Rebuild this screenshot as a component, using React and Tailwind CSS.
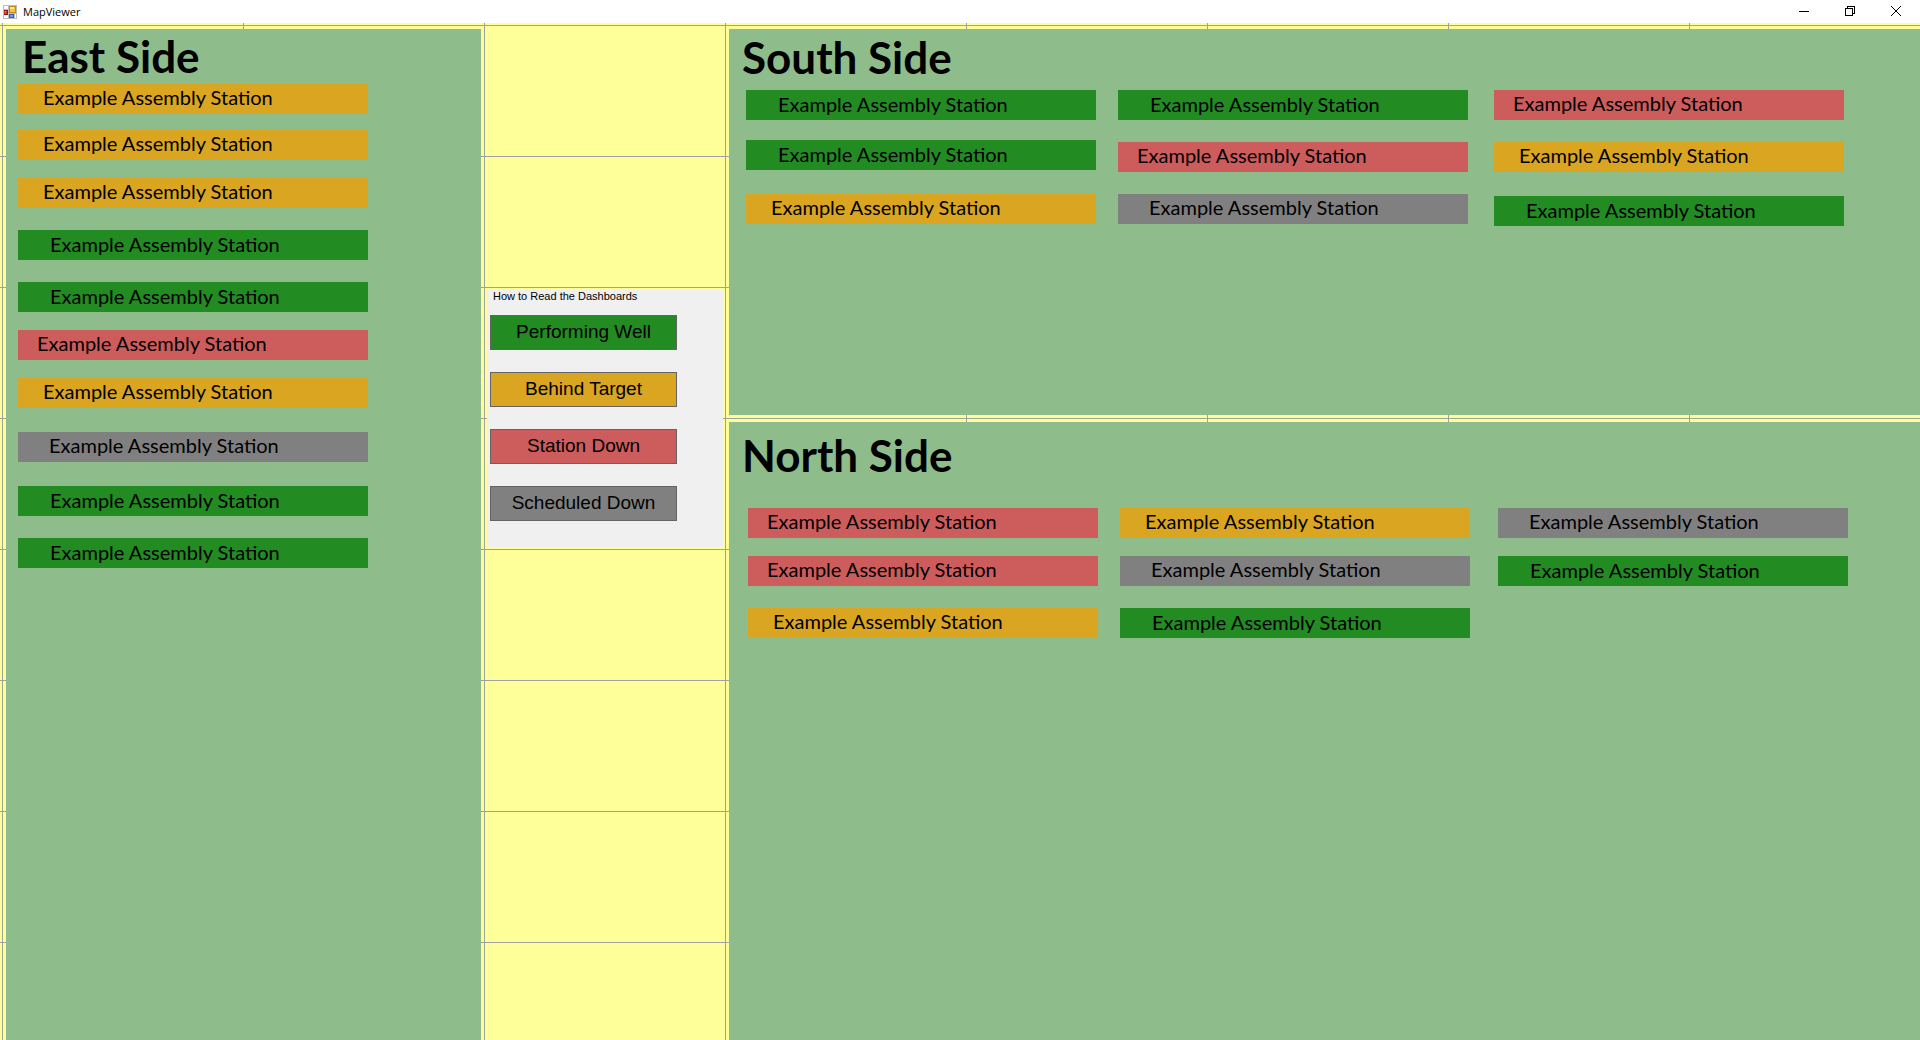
const STATUS = {
  well: "bg-[#228b22] pl-[32px] pt-px",
  behind: "bg-[#daa520] pl-[25px]",
  down: "bg-[#cd5c5c] pl-[19px]",
  scheduled: "bg-[#808080] pl-[31px]",
};

const NAME = "Example Assembly Station";

const east = [
  ["behind", "mt-0"],
  ["behind", "mt-4"],
  ["behind", "mt-[18px]"],
  ["well", "mt-[22px]"],
  ["well", "mt-[22px]"],
  ["down", "mt-[18px]"],
  ["behind", "mt-[18px]"],
  ["scheduled", "mt-6"],
  ["well", "mt-6"],
  ["well", "mt-[22px]"],
];

const south = [
  [["well", "mt-0"], ["well", "mt-5"], ["behind", "mt-6"]],
  [["well", "mt-0"], ["down", "mt-[22px]"], ["scheduled", "mt-[22px]"]],
  [["down", "mt-0"], ["behind", "mt-[22px]"], ["well", "mt-6"]],
];

const north = [
  [["down", "mt-0"], ["down", "mt-[18px]"], ["behind", "mt-[22px]"]],
  [["behind", "mt-0"], ["scheduled", "mt-[18px]"], ["well", "mt-[22px]"]],
  [["scheduled", "mt-0"], ["well", "mt-[18px]"]],
];

const legend = [
  ["Performing Well", "bg-[#228b22]"],
  ["Behind Target", "bg-[#daa520]"],
  ["Station Down", "bg-[#cd5c5c]"],
  ["Scheduled Down", "bg-[#808080]"],
];

function StationList({ stations }) {
  return (
    <ul className="w-[350px]">
      {stations.map(([status, gap], i) => (
        <li
          key={i}
          className={`h-[30px] text-[20px] leading-[26px] whitespace-nowrap ${STATUS[status]} ${gap}`}
        >
          {NAME}
        </li>
      ))}
    </ul>
  );
}

function Side({ title, className, children }) {
  return (
    <section className={`bg-[#8fbc8b] font-[Lato,sans-serif] text-black ${className}`}>
      <h2 className="text-[44px] leading-[50px] font-bold whitespace-nowrap">{title}</h2>
      {children}
    </section>
  );
}

function AppIcon() {
  return (
    <svg width="14" height="14" viewBox="0 0 14 14" shapeRendering="crispEdges" aria-hidden="true">
      <rect width="14" height="14" fill="#bdbdbd" />
      <rect x="1" y="1" width="4" height="3" fill="#fff" />
      <rect x="1" y="10" width="4" height="3" fill="#fff" />
      <rect x="12" y="9" width="1" height="4" fill="#fff" />
      <rect x="1" y="5" width="4" height="5" fill="#8d1b12" />
      <rect x="1" y="6" width="3" height="3" fill="#d8372a" />
      <rect x="2" y="6" width="1" height="1" fill="#f08a80" />
      <rect x="6" y="1" width="7" height="7" fill="#c28a10" />
      <rect x="7" y="2" width="5" height="5" fill="#f6c437" />
      <rect x="7" y="2" width="4" height="2" fill="#ffe58c" />
      <rect x="6" y="9" width="5" height="4" fill="#2c5fc9" />
      <rect x="7" y="10" width="3" height="2" fill="#6d9cf0" />
    </svg>
  );
}

function TitleBar() {
  const button = "flex h-full w-[46px] items-center justify-center pb-[2px]";
  return (
    <header className="flex h-[23px] shrink-0 items-center bg-white pr-px pl-[3px]">
      <AppIcon />
      <h1 className="ml-[6px] pt-[1px] font-['Open_Sans',sans-serif] text-[11px] leading-4 text-black">MapViewer</h1>
      <div className="ml-auto flex h-full">
        <button type="button" aria-label="Minimize" className={button}>
          <svg width="10" height="10" viewBox="0 0 10 10" shapeRendering="crispEdges">
            <rect y="5" width="10" height="1" />
          </svg>
        </button>
        <button type="button" aria-label="Restore" className={button}>
          <svg width="10" height="10" viewBox="0 0 10 10" fill="none" stroke="#000" shapeRendering="crispEdges">
            <path d="M.5 2.5h7v7h-7zM2.5 2V.5h7v7H8" />
          </svg>
        </button>
        <button type="button" aria-label="Close" className={button}>
          <svg width="10" height="10" viewBox="0 0 10 10" fill="none" stroke="#000">
            <path d="M0 0l10 10M10 0L0 10" />
          </svg>
        </button>
      </div>
    </header>
  );
}

export default function App() {
  return (
    <div className="flex min-h-screen flex-col overflow-hidden">
      <TitleBar />
      <main className="grid flex-1 grid-cols-[475px_236px_1fr] gap-x-[6px] bg-[#ffff99] bg-[linear-gradient(to_right,#a0a0a0_1px,transparent_1px),linear-gradient(to_bottom,#a0a0a0_1px,transparent_1px)] bg-[length:241px_131px] bg-[position:2px_2px] pt-[6px] pl-[6px]">
        <Side title="East Side" className="pt-[2px] pl-4">
          <div className="-ml-1 pt-[3px]">
            <StationList stations={east} />
          </div>
        </Side>

        <aside className="mt-[261px] self-start bg-[#f0f0f0] px-[3px] pb-[26px] font-['Liberation_Sans',sans-serif] text-black">
          <h2 className="pl-[3px] text-[11px] leading-[13px]">How to Read the Dashboards</h2>
          <div className="mt-3 flex flex-col items-start gap-[22px]">
            {legend.map(([label, color]) => (
              <button
                key={label}
                type="button"
                className={`h-[35px] w-[187px] border border-[#646464] text-[19px] ${color}`}
              >
                {label}
              </button>
            ))}
          </div>
        </aside>

        <div className="flex flex-col gap-[7px]">
          <Side title="South Side" className="h-[386px] pt-[3px] pl-[13px]">
            <div className="mt-2 ml-1 flex">
              <StationList stations={south[0]} />
              <div className="w-[22px]" />
              <StationList stations={south[1]} />
              <div className="w-[26px]" />
              <StationList stations={south[2]} />
            </div>
          </Side>
          <Side title="North Side" className="flex-1 pt-2 pl-[13px]">
            <div className="mt-7 ml-[6px] flex">
              <StationList stations={north[0]} />
              <div className="w-[22px]" />
              <StationList stations={north[1]} />
              <div className="w-[28px]" />
              <StationList stations={north[2]} />
            </div>
          </Side>
        </div>
      </main>
    </div>
  );
}
